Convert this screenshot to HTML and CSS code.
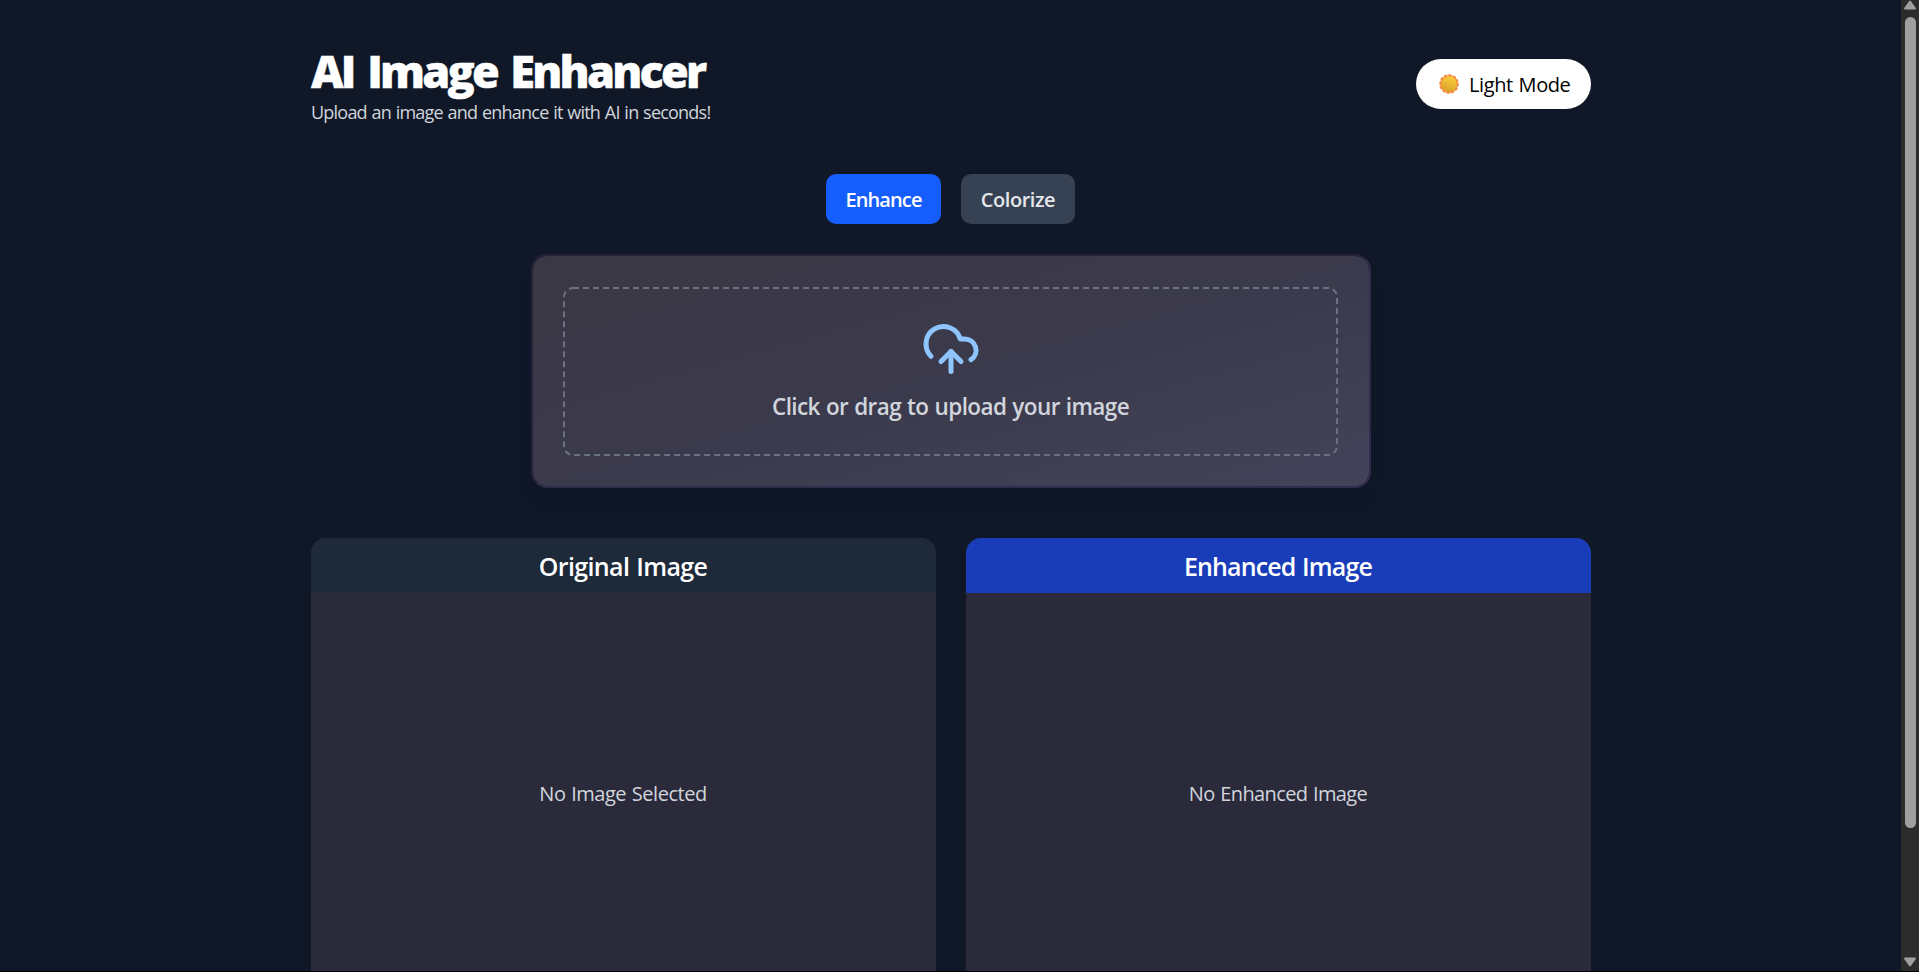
FILE: index.html
```
<!DOCTYPE html>
<html lang="en">
<head>
<meta charset="utf-8">
<title>AI Image Enhancer</title>
<link rel="stylesheet" href="styles.css">
</head>
<body>
<div class="page">
  <main class="content">
    <header class="header">
      <div class="intro">
        <h1 class="title">AI Image Enhancer</h1>
        <p class="subtitle">Upload an image and enhance it with AI in seconds!</p>
      </div>
      <button class="theme">
        <svg class="sun" viewBox="0 0 20 20">
          <defs><linearGradient id="sun" x1="0.7" y1="0" x2="0.3" y2="1"><stop offset="0" stop-color="#fdcf3b"/><stop offset="1" stop-color="#d9a02c"/></linearGradient></defs>
          <circle cx="10" cy="10" r="8.6" fill="#f58b3c"/>
          <circle cx="10" cy="10" r="8.7" fill="none" stroke="#f58b3c" stroke-width="2.2" stroke-linecap="round" stroke-dasharray="1.7 2.855"/>
          <circle cx="10" cy="10" r="7.7" fill="url(#sun)"/>
        </svg>
        <span class="theme-label">Light Mode</span>
      </button>
    </header>
    <div class="modes">
      <button class="mode mode-active"><span class="t-enhance">Enhance</span></button>
      <button class="mode mode-colorize"><span class="t-colorize">Colorize</span></button>
    </div>
    <section class="upload">
      <div class="dropzone">
        <svg class="dash" width="775" height="169"><rect x="1" y="1" width="773" height="167" rx="9" fill="none" stroke="#6a7282" stroke-width="2" stroke-dasharray="6 4"/></svg>
        <svg class="cloud" viewBox="0 0 24 24" fill="none" stroke="#8ec5ff" stroke-width="2" stroke-linecap="round" stroke-linejoin="round"><path d="M12 13v8"/><path d="M4 14.899A7 7 0 1 1 15.71 8h1.79a4.5 4.5 0 0 1 2.5 8.242"/><path d="m8 17 4-4 4 4"/></svg>
        <p class="prompt">Click or drag to upload your image</p>
      </div>
    </section>
    <div class="panels">
      <section class="panel">
        <h2 class="panel-head"><span class="t-original">Original Image</span></h2>
        <div class="panel-body"><span class="t-none">No Image Selected</span></div>
      </section>
      <section class="panel">
        <h2 class="panel-head head-blue"><span class="t-enhanced">Enhanced Image</span></h2>
        <div class="panel-body"><span class="t-noenh">No Enhanced Image</span></div>
      </section>
    </div>
  </main>
  <div class="scrollbar">
    <svg class="arrow" viewBox="0 0 12 10"><path d="M6 1.5 11 8.5H1Z" fill="#9f9f9f" stroke="#9f9f9f" stroke-width="2" stroke-linejoin="round"/></svg>
    <div class="thumb"></div>
    <svg class="arrow arrow-down" viewBox="0 0 12 10"><path d="M1 1.5H11L6 8.5Z" fill="#9f9f9f" stroke="#9f9f9f" stroke-width="2" stroke-linejoin="round"/></svg>
  </div>
</div>
</body>
</html>
```

FILE: styles.css
```
* { box-sizing: border-box; margin: 0; padding: 0; }
body { background: #101828; overflow: hidden; font-family: "Open Sans", "Noto Sans", sans-serif; font-size: 20px; color: #fff; }
button { border: 0; font: inherit; }
.page { display: flex; height: 972px; border-bottom: 1px solid #000; overflow: hidden; }
.content { flex: 1; padding: 40px 310px 0 311px; }
.header { display: flex; justify-content: space-between; height: 134px; white-space: nowrap; }
.title { margin-top: 5px; font-size: 45px; line-height: 52px; font-weight: 800; letter-spacing: -2.8px; word-spacing: 4.5px; -webkit-text-stroke: .4px #fff; }
.subtitle { font-size: 18px; line-height: 30px; color: #d1d5dc; letter-spacing: -.78px; word-spacing: .8px; }
.theme { display: flex; align-items: center; width: 175px; height: 50px; margin-top: 19px; padding-left: 23px; gap: 10px; border-radius: 25px; background: #fff; color: #000; }
.sun { width: 20px; height: 20px; }
.theme-label { padding-top: 2px; line-height: 28px; letter-spacing: -.4px; word-spacing: 1px; }
.modes { display: flex; gap: 20px; padding-left: 515px; }
.mode { width: 115px; height: 50px; padding-top: 2px; border-radius: 10px; font-weight: 600; line-height: 30px; white-space: nowrap; background: #364153; color: #e5e7eb; }
.mode-active { background: #155dfc; color: #fff; }
.mode-colorize { width: 114px; }
.t-enhance { letter-spacing: -.9px; }
.t-colorize { letter-spacing: -.45px; }
.upload { width: 840px; height: 234px; margin: 30px 0 0 220px; padding: 31px 30px; border: 2px solid; border-color: #24233a #2f2c4c #2f2c4c #24233a; border-radius: 16px; background: linear-gradient(to bottom right, #3b3744, #3b3a4c 50%, #434259); background-clip: padding-box; box-shadow: 0 14px 20px -8px rgba(10, 16, 32, .3); }
.dropzone { position: relative; display: flex; flex-direction: column; align-items: center; width: 775px; height: 169px; padding-top: 32px; }
.dash { position: absolute; left: 0; top: 0; }
.cloud { width: 60px; height: 60px; }
.prompt { margin-top: 13px; font-size: 22.5px; line-height: 30px; font-weight: 600; color: #d1d5dc; white-space: nowrap; letter-spacing: -.6px; word-spacing: .8px; }
.panels { display: grid; grid-template-columns: 625px 625px; gap: 30px; margin-top: 50px; }
.panel { height: 480px; border-radius: 15px; overflow: hidden; background: #2a2a3b; }
.panel-head { height: 55px; padding-top: 10px; line-height: 36px; font-size: 25px; font-weight: 600; text-align: center; background: #1e2939; }
.head-blue { background: #193cb8; }
.t-original { margin-right: 1px; letter-spacing: -.62px; word-spacing: 1px; }
.t-enhanced { margin-right: 1px; letter-spacing: -.87px; word-spacing: 1px; }
.panel-body { height: 401px; display: flex; align-items: center; justify-content: center; color: #d1d5dc; }
.t-none { margin-right: 1px; letter-spacing: -.48px; word-spacing: 1px; }
.t-noenh { margin-right: 1px; letter-spacing: -.62px; word-spacing: 1px; }
.scrollbar { width: 18px; background: #2c2c2c; display: flex; flex-direction: column; align-items: center; }
.arrow { width: 12px; height: 10px; }
.thumb { width: 11px; height: 811px; margin: 7px 0 0 1px; border-radius: 6px; background: #9f9f9f; }
.arrow-down { margin: auto 0 4px; }
```
